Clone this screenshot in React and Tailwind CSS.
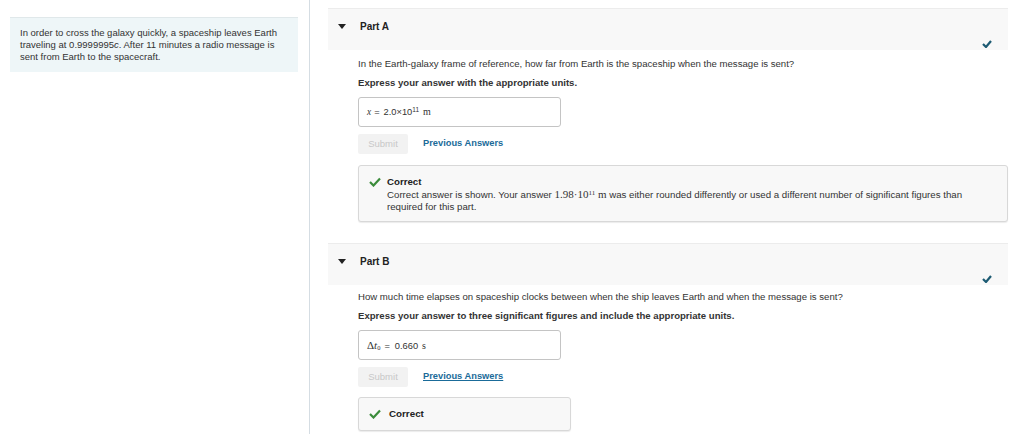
import React from 'react';

const font = { fontFamily: '"Liberation Sans", Arial, Helvetica, sans-serif' };
const serif = { fontFamily: '"Liberation Serif", "Times New Roman", serif' };

function Caret() {
    return (
        <svg width="8" height="6" viewBox="0 0 8 6" className="shrink-0">
            <path d="M0 0 L8 0 L4 5 Z" fill="#222" />
        </svg>
    );
}

function SmallCheck({ color = '#1d5b73' }) {
    return (
        <svg width="10" height="8" viewBox="0 0 10 8">
            <path d="M1 4 L4 7 L9 1" fill="none" stroke={color} strokeWidth="2.2" />
        </svg>
    );
}

function GreenCheck() {
    return (
        <svg width="12" height="10" viewBox="0 0 12 10">
            <path d="M1 5 L4.5 8.5 L11 1.5" fill="none" stroke="#3b8c3b" strokeWidth="2.2" />
        </svg>
    );
}

function PartHeader({ label }) {
    return (
        <div className="relative h-[42px] w-[680px] bg-[#f8f8f8] border-t border-[#ececec] flex items-start pt-[12px] pl-[10px] gap-[14px]">
            <div className="pt-[3px]"><Caret /></div>
            <span className="text-[10px] leading-[12px] font-bold text-[#222]">{label}</span>
            <div className="absolute right-[16px] bottom-[2px]">
                <SmallCheck />
            </div>
        </div>
    );
}

function Submit() {
    return (
        <div className="w-[50px] h-[20px] bg-[#f2f2f2] rounded-[2px] flex items-center justify-center text-[9.5px] text-[#c8c8c8]">
            Submit
        </div>
    );
}

export default function App() {
    return (
        <div className="w-[1024px] h-[434px] bg-white flex text-[#333] overflow-hidden" style={font}>
            <div className="w-[310px] h-full border-r border-[#d5dde3] pt-[17px] pl-[10px] pr-[11px] shrink-0">
                <div className="bg-[#eef6f8] border-t border-[#e0e8ea] px-[10px] pt-[9px] pb-[9px] text-[9.5px] leading-[12px] text-[#333]">
                    In order to cross the galaxy quickly, a spaceship leaves Earth traveling at 0.9999995<i>c</i>. After 11 minutes a radio message is sent from Earth to the spacecraft.
                </div>
            </div>

            <div className="pl-[18px] pt-[8px] flex flex-col">
                <PartHeader label="Part A" />
                <div className="pl-[30px] pt-[8px] flex flex-col">
                    <p className="text-[9.6px] leading-[12px] text-[#333]">
                        In the Earth-galaxy frame of reference, how far from Earth is the spaceship when the message is sent?
                    </p>
                    <p className="mt-[7px] text-[9.6px] leading-[12px] font-bold text-[#333]">
                        Express your answer with the appropriate units.
                    </p>
                    <div className="mt-[8px] w-[203px] h-[30px] border border-[#c4c4c4] rounded-[3px] flex items-center pl-[8px]">
                        <div className="flex items-baseline text-[9.3px] text-[#333]">
                            <span className="italic" style={serif}>x</span>
                            <span className="ml-[3px]">=</span>
                            <span className="ml-[4px]">2.0×10<sup className="text-[6.5px]">11</sup></span>
                            <span className="ml-[4px] text-[10px]" style={serif}>m</span>
                        </div>
                    </div>
                    <div className="mt-[7px] flex items-center gap-[15px]">
                        <Submit />
                        <span className="text-[9.3px] font-bold text-[#1a6b99]">Previous Answers</span>
                    </div>
                    <div className="mt-[11px] w-[650px] h-[57px] bg-[#f8f8f8] border border-[#d8d8d8] rounded-[3px] shadow-[0_1px_1px_rgba(0,0,0,0.08)] flex pl-[10px] pt-[10px] gap-[6px]">
                        <div className="pt-[1px]"><GreenCheck /></div>
                        <div className="flex flex-col text-[9.7px] leading-[12px]">
                            <span className="font-bold text-[#222]">Correct</span>
                            <span className="text-[#333] whitespace-nowrap">
                                Correct answer is shown. Your answer{' '}
                                <span className="text-[11px]" style={serif}>1.98·10<sup className="text-[7px]">11</sup> m</span>
                                {' '}was either rounded differently or used a different number of significant figures than
                            </span>
                            <span className="text-[#333]">required for this part.</span>
                        </div>
                    </div>
                </div>

                <div className="mt-[21px]">
                    <PartHeader label="Part B" />
                </div>
                <div className="pl-[30px] pt-[6px] flex flex-col">
                    <p className="text-[9.6px] leading-[12px] text-[#333]">
                        How much time elapses on spaceship clocks between when the ship leaves Earth and when the message is sent?
                    </p>
                    <p className="mt-[7px] text-[9.6px] leading-[12px] font-bold text-[#333]">
                        Express your answer to three significant figures and include the appropriate units.
                    </p>
                    <div className="mt-[8px] w-[203px] h-[30px] border border-[#c4c4c4] rounded-[3px] flex items-center pl-[8px]">
                        <div className="flex items-baseline text-[9.3px] text-[#333]">
                            <span className="text-[11px]" style={serif}>Δ<i>t</i><sub className="text-[6.5px]">0</sub></span>
                            <span className="ml-[4px]">=</span>
                            <span className="ml-[5px]">0.660</span>
                            <span className="ml-[4px] text-[10px]" style={serif}>s</span>
                        </div>
                    </div>
                    <div className="mt-[7px] flex items-center gap-[15px]">
                        <Submit />
                        <span className="text-[9.3px] font-bold text-[#1a6b99] underline">Previous Answers</span>
                    </div>
                    <div className="mt-[10px] w-[213px] h-[34px] bg-[#f8f8f8] border border-[#d8d8d8] rounded-[3px] shadow-[0_1px_1px_rgba(0,0,0,0.08)] flex items-center pl-[10px] gap-[8px]">
                        <GreenCheck />
                        <span className="text-[9.8px] font-bold text-[#222]">Correct</span>
                    </div>
                </div>
            </div>
        </div>
    );
}
